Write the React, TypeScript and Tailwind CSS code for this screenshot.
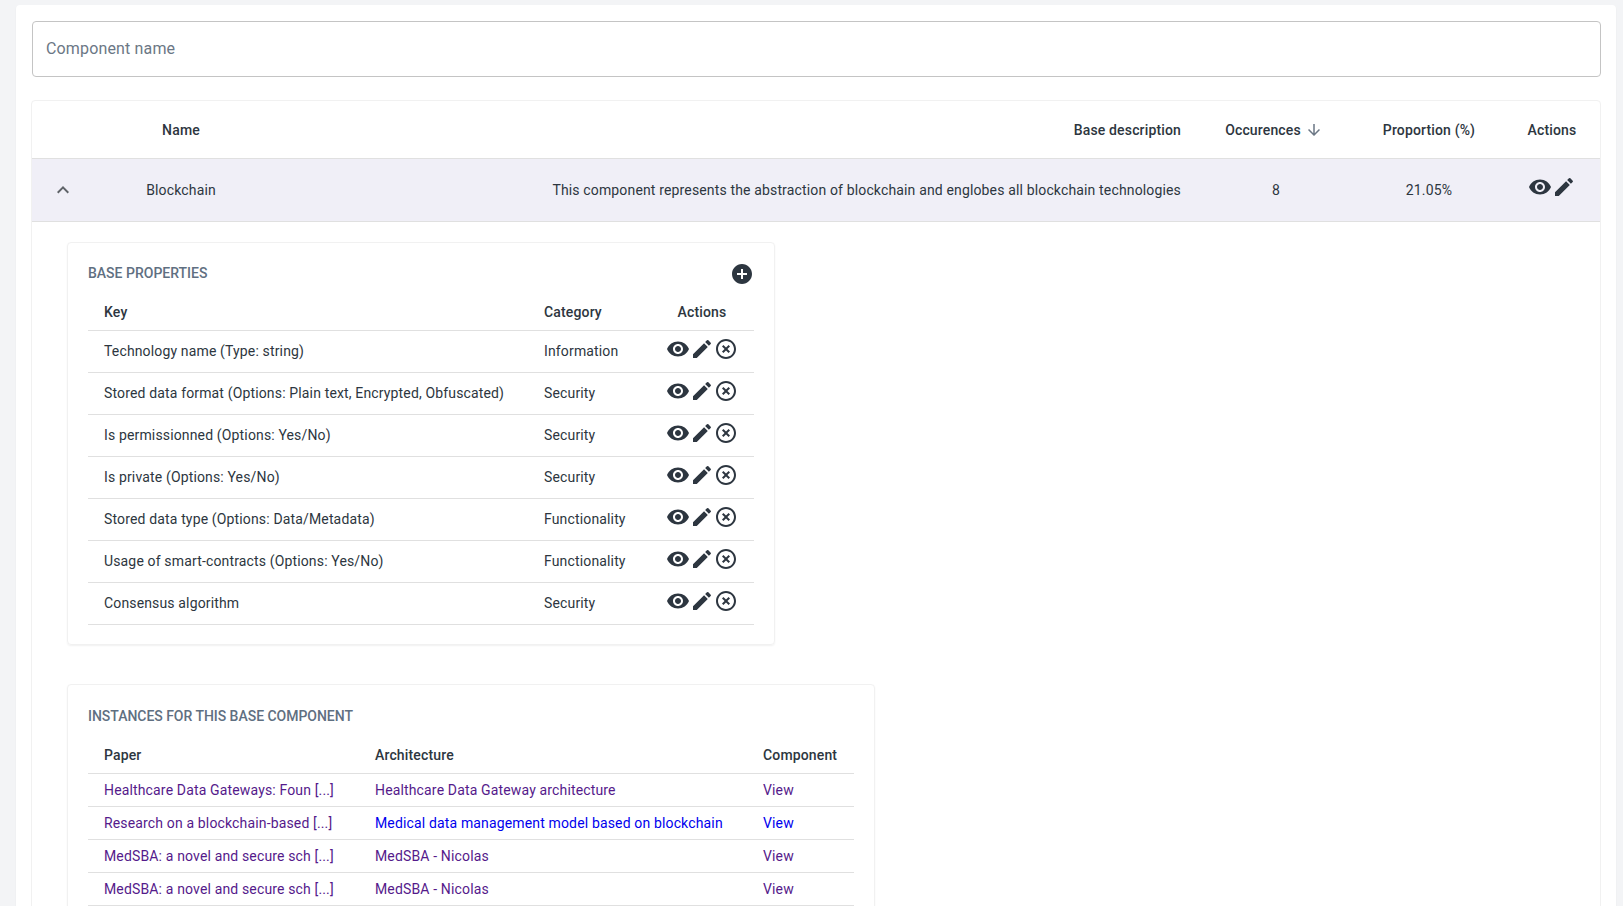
const paths = {
  eye: "M12 4.5C7 4.5 2.73 7.61 1 12c1.73 4.39 6 7.5 11 7.5s9.27-3.11 11-7.5c-1.73-4.39-6-7.5-11-7.5zM12 17c-2.76 0-5-2.24-5-5s2.24-5 5-5 5 2.24 5 5-2.24 5-5 5zm0-8c-1.66 0-3 1.34-3 3s1.34 3 3 3 3-1.34 3-3-1.34-3-3-3z",
  edit: "M3 17.25V21h3.75L17.81 9.94l-3.75-3.75L3 17.25zM20.71 7.04c.39-.39.39-1.02 0-1.41l-2.34-2.34a.9959.9959 0 0 0-1.41 0l-1.83 1.83 3.75 3.75 1.83-1.83z",
  remove:
    "M14.59 8 12 10.59 9.41 8 8 9.41 10.59 12 8 14.59 9.41 16 12 13.41 14.59 16 16 14.59 13.41 12 16 9.41 14.59 8zM12 2C6.47 2 2 6.47 2 12s4.47 10 10 10 10-4.47 10-10S17.53 2 12 2zm0 18c-4.41 0-8-3.59-8-8s3.59-8 8-8 8 3.59 8 8-3.59 8-8 8z",
  add: "M12 2C6.48 2 2 6.48 2 12s4.48 10 10 10 10-4.48 10-10S17.52 2 12 2zm5 11h-4v4h-2v-4H7v-2h4V7h2v4h4v2z",
  less: "m12 8-6 6 1.41 1.41L12 10.83l4.59 4.58L18 14z",
  down: "M20 12l-1.41-1.41L13 16.17V4h-2v12.17l-5.58-5.59L4 12l8 8 8-8z",
};

function Icon({ d, className }: { d: string; className: string }) {
  return (
    <svg viewBox="0 0 24 24" fill="currentColor" className={className}>
      <path d={d} />
    </svg>
  );
}

const properties = [
  ["Technology name (Type: string)", "Information"],
  ["Stored data format (Options: Plain text, Encrypted, Obfuscated)", "Security"],
  ["Is permissionned (Options: Yes/No)", "Security"],
  ["Is private (Options: Yes/No)", "Security"],
  ["Stored data type (Options: Data/Metadata)", "Functionality"],
  ["Usage of smart-contracts (Options: Yes/No)", "Functionality"],
  ["Consensus algorithm", "Security"],
];

const instances = [
  ["Healthcare Data Gateways: Foun [...]", "Healthcare Data Gateway architecture", false],
  ["Research on a blockchain-based [...]", "Medical data management model based on blockchain", true],
  ["MedSBA: a novel and secure sch [...]", "MedSBA - Nicolas", false],
  ["MedSBA: a novel and secure sch [...]", "MedSBA - Nicolas", false],
] as const;

export default function App() {
  return (
    <div className="h-[906px] overflow-hidden bg-[#f3f4f6] pt-[5px] pl-4 pr-[7px] font-['Roboto',sans-serif] text-sm tracking-[0.15px] text-[#2d3640]">
      <div className="h-[1200px] rounded bg-white pl-[15px] pr-[15px] pt-4 shadow-[0_1px_2px_rgba(0,0,0,0.06)]">
        <input
          placeholder="Component name"
          className="ml-[1px] h-[56px] w-[calc(100%-1px)] rounded border border-[#c4c4c4] px-[13px] pb-[2px] text-base text-[#2d3640] placeholder:text-[#6b7785]"
        />

        <div className="mt-[23px] rounded border border-[#f1f1f1] bg-white">
          <table className="w-full table-fixed border-collapse">
            <thead>
              <tr className="h-[57px] border-b border-[#e0e0e0] font-medium">
                <th className="w-[98px]"></th>
                <th className="w-[102px] pt-[2px] text-center font-medium">Name</th>
                <th className="pr-[19px] pt-[2px] text-right font-medium">Base description</th>
                <th className="w-[152px] pr-1 pt-[2px] font-medium">
                  <span className="flex items-center justify-center gap-1">
                    Occurences
                    <Icon d={paths.down} className="h-[18px] w-[18px] text-[#6b7785]" />
                  </span>
                </th>
                <th className="w-[154px] pt-[2px] text-center font-medium">Proportion (%)</th>
                <th className="w-[94px] pr-[2px] pt-[2px] text-center font-medium">Actions</th>
              </tr>
            </thead>
            <tbody>
              <tr className="h-[63px] border-b border-[#e0e0e0] bg-[#f0eff7]">
                <td className="pl-[19px]">
                  <Icon d={paths.less} className="h-6 w-6 text-[#5f6368]" />
                </td>
                <td className="text-center">Blockchain</td>
                <td className="pr-[19px] text-right">
                  This component represents the abstraction of blockchain and englobes all blockchain technologies
                </td>
                <td className="text-center">8</td>
                <td className="text-center">21.05%</td>
                <td className="pr-[2px]">
                  <div className="-mt-[6px] flex justify-center">
                    <Icon d={paths.eye} className="h-6 w-6" />
                    <Icon d={paths.edit} className="h-6 w-6" />
                  </div>
                </td>
              </tr>
            </tbody>
          </table>

          <div className="flex flex-col items-start gap-[39px] pl-[35px] pt-5">
            <section className="w-[708px] rounded border border-[#f1f1f1] px-5 pb-[19px] pt-5 shadow-[0_1px_2px_rgba(0,0,0,0.06)]">
              <div className="flex h-[20px] items-center justify-between text-[#5f6f81]">
                <h3 className="font-medium tracking-normal">BASE PROPERTIES</h3>
                <Icon d={paths.add} className="mt-[2px] h-6 w-6 text-[#2d3640]" />
              </div>
              <table className="mt-[8px] w-full table-fixed border-collapse">
                <thead>
                  <tr className="h-[40px] border-b border-[#e0e0e0]">
                    <th className="w-[456px] pl-4 pt-1 text-left font-medium">Key</th>
                    <th className="w-[106px] pt-1 text-left font-medium">Category</th>
                    <th className="pt-1 text-center font-medium">Actions</th>
                  </tr>
                </thead>
                <tbody>
                  {properties.map(([key, category]) => (
                    <tr key={key} className="h-[42px] border-b border-[#e0e0e0]">
                      <td className="pb-[2px] pl-4">{key}</td>
                      <td className="pb-[2px]">{category}</td>
                      <td>
                        <div className="-mt-[6px] flex justify-center">
                          <Icon d={paths.eye} className="h-6 w-6" />
                          <Icon d={paths.edit} className="h-6 w-6" />
                          <Icon d={paths.remove} className="h-6 w-6" />
                        </div>
                      </td>
                    </tr>
                  ))}
                </tbody>
              </table>
            </section>

            <section className="w-[808px] rounded border border-[#f1f1f1] px-5 pb-5 pt-[21px] shadow-[0_1px_2px_rgba(0,0,0,0.06)]">
              <h3 className="h-5 font-medium tracking-[-0.03px] text-[#5f6f81]">INSTANCES FOR THIS BASE COMPONENT</h3>
              <table className="mt-[8px] w-full table-fixed border-collapse">
                <thead>
                  <tr className="h-[39px] border-b border-[#e0e0e0]">
                    <th className="w-[287px] pl-4 pt-[3px] text-left font-medium">Paper</th>
                    <th className="w-[388px] pt-[3px] text-left font-medium">Architecture</th>
                    <th className="pt-[3px] text-left font-medium">Component</th>
                  </tr>
                </thead>
                <tbody>
                  {instances.map(([paper, architecture, fresh], i) => (
                    <tr key={i} className="h-[33px] border-b border-[#e0e0e0]">
                      <td className="pl-4 text-[#551a8b]">{paper}</td>
                      <td className={fresh ? "text-[#0000ee]" : "text-[#551a8b]"}>{architecture}</td>
                      <td className={fresh ? "text-[#0000ee]" : "text-[#551a8b]"}>View</td>
                    </tr>
                  ))}
                </tbody>
              </table>
            </section>
          </div>
        </div>
      </div>
    </div>
  );
}
